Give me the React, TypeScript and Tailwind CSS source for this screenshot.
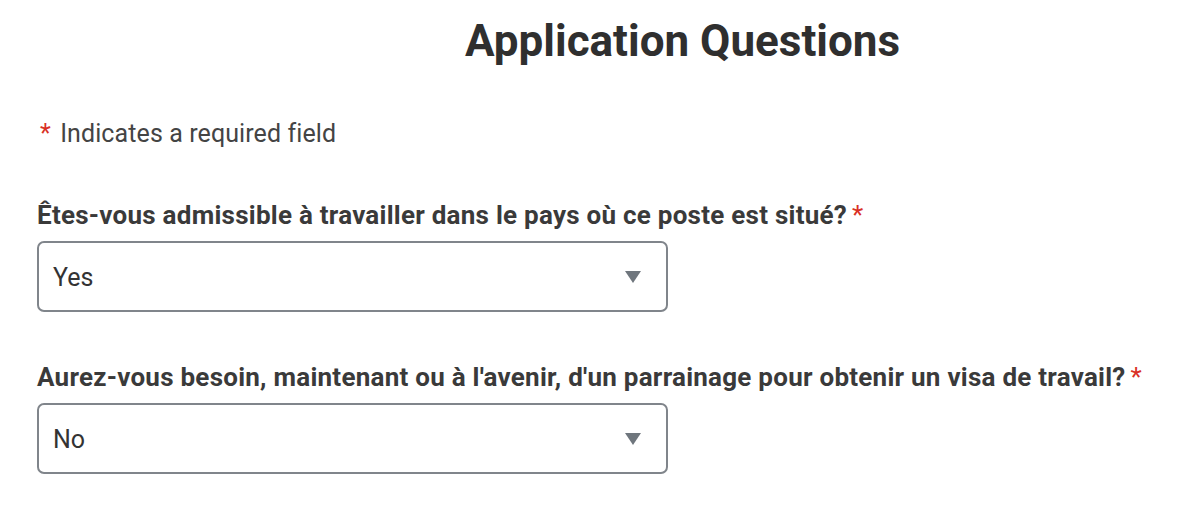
const questions = [
  {
    label: 'Êtes-vous admissible à travailler dans le pays où ce poste est situé?',
    value: 'Yes',
  },
  {
    label: "Aurez-vous besoin, maintenant ou à l'avenir, d'un parrainage pour obtenir un visa de travail?",
    value: 'No',
  },
];

function SelectField({ label, value }: { label: string; value: string }) {
  return (
    <div className="flex flex-col">
      <label className="text-[26px] font-bold leading-[28px] tracking-[0.25px] text-[#3a3a3a]">
        {label}
        <span className="ml-[5px] font-normal text-[#d93025]">*</span>
      </label>
      <div className="mt-[12px] flex h-[71px] w-[631px] items-center justify-between rounded-[7px] border-2 border-[#80858b] bg-white pl-[14px] pr-[25px]">
        <span className="pt-[2px] text-[25px] text-[#333]">{value}</span>
        <svg viewBox="0 0 16 12" className="h-[12px] w-[16px] fill-[#6f767d]">
          <path d="M0 0h16L8 12z" />
        </svg>
      </div>
    </div>
  );
}

export default function App() {
  return (
    <div className="min-h-[528px] bg-white px-[37px] font-['Roboto',sans-serif] text-[#333]">
      <h1 className="pt-[15px] pl-[428px] text-[44px] font-bold leading-[52px] text-[#2f2f2f]">
        Application Questions
      </h1>
      <p className="mt-[52px] pl-[3px] text-[25px] leading-[30px] tracking-[0.1px] text-[#444]">
        <span className="mr-[3px] text-[#d93025]">*</span> Indicates a required field
      </p>
      <div className="mt-[52px] flex flex-col gap-[51px]">
        {questions.map((q) => (
          <SelectField key={q.value} label={q.label} value={q.value} />
        ))}
      </div>
    </div>
  );
}
